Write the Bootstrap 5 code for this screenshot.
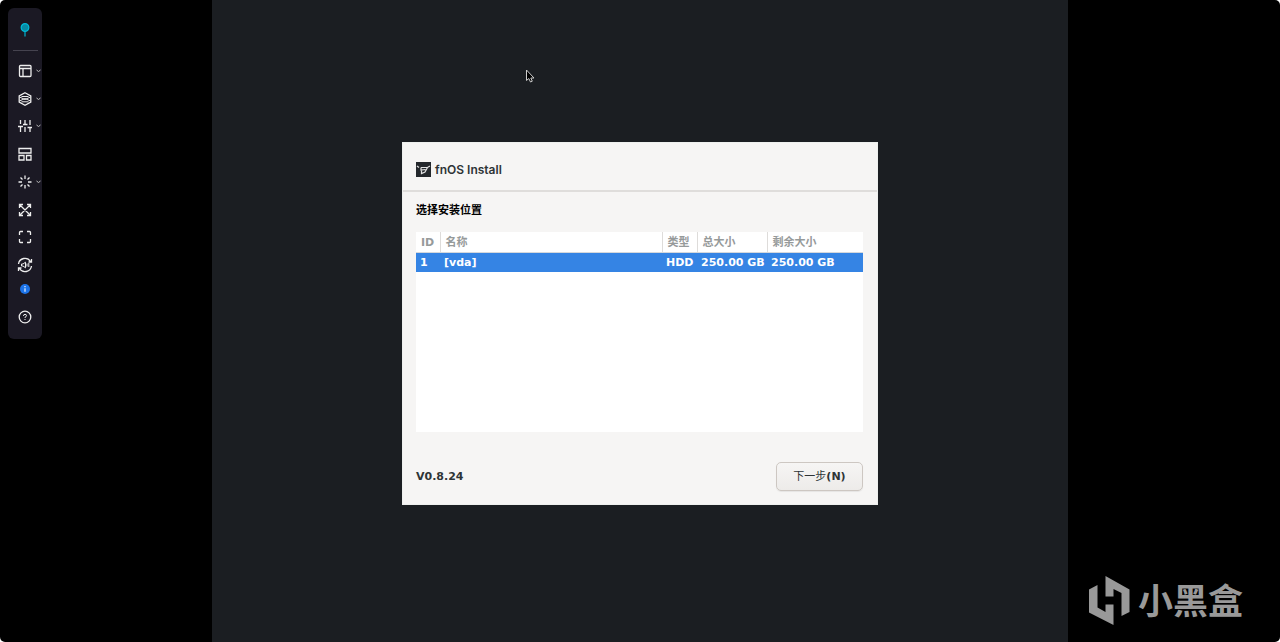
<!DOCTYPE html>
<html lang="zh-CN">
<head>
<meta charset="utf-8">
<meta name="viewport" content="width=device-width, initial-scale=1">
<title>fnOS Install</title>
<link href="https://cdn.jsdelivr.net/npm/bootstrap@5.3.0/dist/css/bootstrap.min.css" rel="stylesheet">
<style>
html{background:#fff}
body{background:#fff;font-family:"DejaVu Sans","Noto Sans CJK SC",sans-serif;font-size:11px;line-height:16px;color:#2e3436}
.console{background:#000;border-radius:5px;min-height:100vh}
.guest{background:#1b1e22;height:100vh;aspect-ratio:4/3}
.rail{top:8px;left:8px;width:34px;background:#1b1924;border-radius:6px;padding:14px 0}
.rail hr{width:25px;margin:12px 0;border-color:#45434f;opacity:1}
.rail svg{display:block;fill:none;stroke:#eee;stroke-width:1.3}
.rail button{width:34px;height:16px}
.rail .chev{position:absolute;left:28px;top:6px;stroke:#bbb;stroke-width:1}
.tools{height:210px}
.installer{width:476px;margin-top:4px;background:#f6f5f4;border:1px solid #eef0ee}
.titlebar{height:49px;padding:7px 13px 0;border-bottom:2px solid #dfdddb}
.titlebar h1{font:600 12px/16px Inter,sans-serif;color:#2e3436}
.main-pane{padding:10px 14px 13px 13px}
.main-pane h2{font:700 11px/18px "DejaVu Sans","Noto Sans CJK SC",sans-serif;color:#000;margin-bottom:12px}
.disks{height:200px;background:#fff;margin-bottom:30px}
.disks table{table-layout:fixed;width:100%;font-weight:700;line-height:16px}
.disks th{height:21px;padding:3px 5px 0;color:#969a9a;border-right:1px solid #dedcda;border-bottom:1px solid #d5d8dc;white-space:nowrap}
.disks th:last-child{border-right:0}
.disks td{height:19px;padding:2px 4px 0;background:#3584e4;color:#fff;white-space:nowrap}
.disks tr>:first-child{padding-right:0}
.disks td:nth-child(n+4){padding-right:0}
.version{padding-top:2px}
.next-btn{width:87px;height:29px;font-size:11px;line-height:16px;padding:1px 0 0;border:1px solid #cdc7c2;border-radius:5px;background:linear-gradient(#f6f5f4,#edebe9);box-shadow:0 1px 1px #0001;color:#2e3436}
.pointer{left:525px;top:69px}
.brand{right:37px;bottom:16px;color:#999}
.brand span{font:700 35px/46px "Noto Sans CJK SC",sans-serif;padding-bottom:4px}
</style>
</head>
<body>
<div class="console position-relative d-flex justify-content-center overflow-hidden">
  <nav class="rail position-absolute d-flex flex-column align-items-center" aria-label="控制栏">
    <button class="btn p-0 border-0 d-flex justify-content-center" aria-label="固定"><svg width="12" height="16" viewBox="0 0 12 16"><path d="M6 8v6.500" stroke="#00a9c4"/><circle cx="6" cy="5.500" r="3.800" fill="#078ba4" stroke="#00b9d6"/></svg></button>
    <hr>
    <div class="tools d-flex flex-column justify-content-between">
      <button class="btn p-0 border-0 position-relative d-flex justify-content-center" aria-label="布局"><svg width="16" height="16" viewBox="0 0 16 16"><rect x="2.500" y="2.500" width="11.500" height="11" rx="1"/><path d="M2.500 5.500H14M6 5.500v8"/></svg><svg class="chev" width="5" height="4" viewBox="0 0 5 4"><path d="M.5 1l2 1.500L4.500 1"/></svg></button>
      <button class="btn p-0 border-0 position-relative d-flex justify-content-center" aria-label="显示"><svg width="16" height="16" viewBox="0 0 16 16"><path d="M8 1.800l5.800 3.200v6L8 14.200 2.200 11V5z"/><path d="M2.500 6L8 8.500 13.500 6M2.500 10L8 7.500l5.500 2.500M4.500 5.500h7M4.500 10.800h7" stroke-width="1"/></svg><svg class="chev" width="5" height="4" viewBox="0 0 5 4"><path d="M.5 1l2 1.500L4.500 1"/></svg></button>
      <button class="btn p-0 border-0 position-relative d-flex justify-content-center" aria-label="设置"><svg width="16" height="16" viewBox="0 0 16 16"><path d="M3.500 2v4M3.500 8.500V14M1 8.500h5M8 2v4M6 6.500h4.500M8 9v5M13 2v5M13 9.500V14M10.500 9.500h4.500"/></svg><svg class="chev" width="5" height="4" viewBox="0 0 5 4"><path d="M.5 1l2 1.500L4.500 1"/></svg></button>
      <button class="btn p-0 border-0 d-flex justify-content-center" aria-label="面板"><svg width="16" height="16" viewBox="0 0 16 16"><path d="M2 2.500h12v4.500H2zM2 9.500h5V14H2zM9.500 9.500H14V14H9.500z"/></svg></button>
      <button class="btn p-0 border-0 position-relative d-flex justify-content-center" aria-label="动作"><svg width="16" height="16" viewBox="0 0 16 16"><path d="M8 1.500v3.500M8 11v3.500M1.500 8H5M11 8h3.500M3.500 3.500l2 2M10.500 10.500l2 2M12.500 3.500l-2 2M5.500 10.500l-2 2"/></svg><svg class="chev" width="5" height="4" viewBox="0 0 5 4"><path d="M.5 1l2 1.500L4.500 1"/></svg></button>
      <button class="btn p-0 border-0 d-flex justify-content-center" aria-label="缩放"><svg width="16" height="16" viewBox="0 0 16 16"><path d="M2.500 2.500l11 11M13.500 2.500l-11 11M2.500 6V2.500H6M10 2.500h3.500V6M13.500 10v3.500H10M6 13.500H2.500V10"/></svg></button>
      <button class="btn p-0 border-0 d-flex justify-content-center" aria-label="全屏"><svg width="16" height="16" viewBox="0 0 16 16"><path d="M2.500 6V3.500q0-1 1-1H6M10 2.500h2.500q1 0 1 1V6M13.500 10v2.500q0 1-1 1H10M6 13.500H3.500q-1 0-1-1V10"/></svg></button>
      <button class="btn p-0 border-0 d-flex justify-content-center" aria-label="音频"><svg width="16" height="16" viewBox="0 0 16 16"><path d="M1.500 7A6.500 6.500 0 0 1 13.500 4.500M14.500 2v3h-3M14.500 9A6.500 6.500 0 0 1 2.500 11.500M1.500 14v-3h3"/><path d="M4.500 7v2H6l2.500 1.800V5.200L6 7zM10 6.500v3M11.800 6v4" stroke-width="1"/></svg></button>
    </div>
    <button class="btn p-0 border-0 d-flex justify-content-center align-items-center mt-2" aria-label="信息"><svg width="12" height="12" viewBox="0 0 12 12"><circle cx="6" cy="6" r="5" fill="#1c73e8" stroke="none"/><path d="M6 5.200v3.500M6 3v1.200" stroke="#d9e8ff"/></svg></button>
    <button class="btn p-0 border-0 d-flex justify-content-center mt-2 pt-1 h-auto" aria-label="帮助"><svg width="16" height="16" viewBox="0 0 16 16"><circle cx="8" cy="8" r="5.800"/><path d="M6.500 7q0-1.700 1.500-1.700T9.500 6.800Q9.500 7.600 8 8.300V9M8 10v1" stroke-width="1"/></svg></button>
  </nav>

  <main class="guest d-flex align-items-center justify-content-center">
    <section class="installer">
      <header class="titlebar d-flex align-items-center gap-1">
        <svg width="15" height="15" viewBox="0 0 15 15"><path d="M0 0h15v15H0z" fill="#24282c"/><path d="M1 4l2 1.500M5 5.500h6.500L14 4M5 5.500V8l4.500-.5M5.500 8v3.500l3.500-1.500L11.500 5.500" fill="none" stroke="#e4e4e4" stroke-width="1.200"/></svg>
        <h1 class="m-0">fnOS Install</h1>
      </header>
      <div class="main-pane">
        <h2>选择安装位置</h2>
        <div class="disks">
          <table>
            <colgroup><col style="width:24px"><col><col style="width:35px"><col style="width:70px"><col style="width:96px"></colgroup>
            <thead><tr><th>ID</th><th>名称</th><th>类型</th><th>总大小</th><th>剩余大小</th></tr></thead>
            <tbody><tr><td>1</td><td>[vda]</td><td>HDD</td><td>250.00 GB</td><td>250.00 GB</td></tr></tbody>
          </table>
        </div>
        <footer class="d-flex align-items-center justify-content-between">
          <strong class="version">V0.8.24</strong>
          <button class="next-btn">下一步<strong>(N)</strong></button>
        </footer>
      </div>
    </section>
  </main>

  <svg class="pointer position-absolute" width="10" height="15" viewBox="0 0 10 15"><path d="M1.500 1v10.500l2.300-2L5.500 13l1.800-.8L5.800 9H9z" fill="#000" stroke="#ccc"/></svg>
  <div class="brand position-absolute d-flex align-items-center gap-2">
    <svg width="42" height="50" viewBox="0 0 42 50" fill="#999"><path d="M17.500 0l24 13.500V36l-8 4V17l-8-4v7.500h-8z"/><path d="M9.500 9v22.500l8 4.500v-7.500h8V49L1 36.500v-23z"/></svg>
    <span>小黑盒</span>
  </div>
</div>
<script src="https://cdn.jsdelivr.net/npm/bootstrap@5.3.0/dist/js/bootstrap.bundle.min.js"></script>
</body>
</html>
